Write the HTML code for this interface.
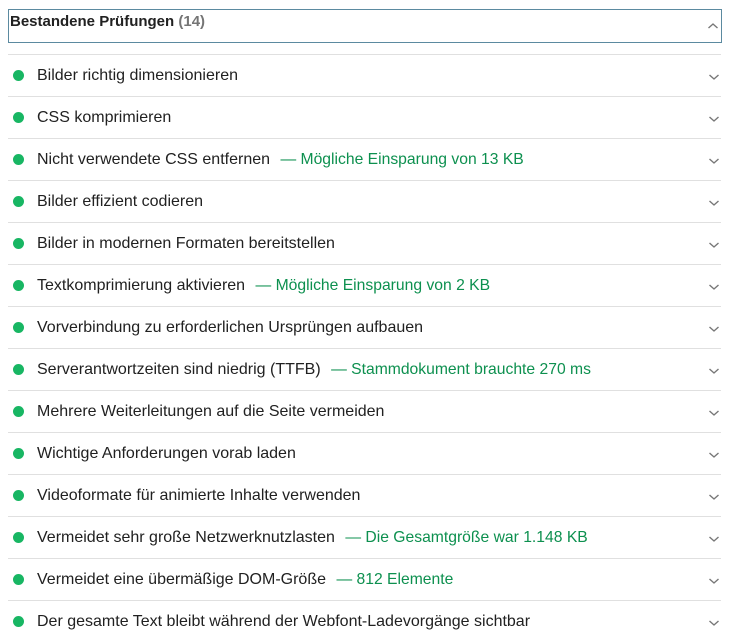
<!DOCTYPE html>
<html><head><meta charset="utf-8"><style>
body{margin:0;background:#fff;width:737px;height:637px;overflow:hidden;position:relative;font-family:"Liberation Sans",sans-serif;}
.hdr{position:absolute;left:8px;top:9px;width:712px;height:32px;border:1px solid #5b8aa0;box-sizing:content-box;}
.hdr .t{position:absolute;left:1px;top:3px;font-size:15px;font-weight:bold;color:#212121;}
.hdr .t span{color:#757575;}
.row{position:absolute;left:8px;width:713px;height:42px;border-top:1px solid #e0e0e0;}
.dot{position:absolute;left:5px;top:15px;width:11px;height:11px;border-radius:50%;background:#18b663;}
.txt{position:absolute;left:29px;top:12px;font-size:16px;color:#212121;white-space:nowrap;}
.g{color:#0d904f;margin-left:6px;font-size:15.7px;}
.chev{position:absolute;right:1px;top:18px;}
</style></head><body>
<div class="hdr"><div class="t">Bestandene Prüfungen <span>(14)</span></div>
<svg class="chev" style="top:12px;right:2px" width="12" height="8" viewBox="0 0 12 8"><path d="M1.5 6 L6 2 L10.5 6" fill="none" stroke="#777" stroke-width="1.4"/></svg></div>

<div class="row" style="top:54px"><div class="dot"></div><div class="txt">Bilder richtig dimensionieren</div><svg class="chev" width="12" height="8" viewBox="0 0 12 8"><path d="M1.5 2 L6 6 L10.5 2" fill="none" stroke="#777" stroke-width="1.4"/></svg></div>
<div class="row" style="top:96px"><div class="dot"></div><div class="txt">CSS komprimieren</div><svg class="chev" width="12" height="8" viewBox="0 0 12 8"><path d="M1.5 2 L6 6 L10.5 2" fill="none" stroke="#777" stroke-width="1.4"/></svg></div>
<div class="row" style="top:138px"><div class="dot"></div><div class="txt">Nicht verwendete CSS entfernen <span class="g">— Mögliche Einsparung von 13 KB</span></div><svg class="chev" width="12" height="8" viewBox="0 0 12 8"><path d="M1.5 2 L6 6 L10.5 2" fill="none" stroke="#777" stroke-width="1.4"/></svg></div>
<div class="row" style="top:180px"><div class="dot"></div><div class="txt">Bilder effizient codieren</div><svg class="chev" width="12" height="8" viewBox="0 0 12 8"><path d="M1.5 2 L6 6 L10.5 2" fill="none" stroke="#777" stroke-width="1.4"/></svg></div>
<div class="row" style="top:222px"><div class="dot"></div><div class="txt">Bilder in modernen Formaten bereitstellen</div><svg class="chev" width="12" height="8" viewBox="0 0 12 8"><path d="M1.5 2 L6 6 L10.5 2" fill="none" stroke="#777" stroke-width="1.4"/></svg></div>
<div class="row" style="top:264px"><div class="dot"></div><div class="txt">Textkomprimierung aktivieren <span class="g">— Mögliche Einsparung von 2 KB</span></div><svg class="chev" width="12" height="8" viewBox="0 0 12 8"><path d="M1.5 2 L6 6 L10.5 2" fill="none" stroke="#777" stroke-width="1.4"/></svg></div>
<div class="row" style="top:306px"><div class="dot"></div><div class="txt">Vorverbindung zu erforderlichen Ursprüngen aufbauen</div><svg class="chev" width="12" height="8" viewBox="0 0 12 8"><path d="M1.5 2 L6 6 L10.5 2" fill="none" stroke="#777" stroke-width="1.4"/></svg></div>
<div class="row" style="top:348px"><div class="dot"></div><div class="txt">Serverantwortzeiten sind niedrig (TTFB) <span class="g">— Stammdokument brauchte 270 ms</span></div><svg class="chev" width="12" height="8" viewBox="0 0 12 8"><path d="M1.5 2 L6 6 L10.5 2" fill="none" stroke="#777" stroke-width="1.4"/></svg></div>
<div class="row" style="top:390px"><div class="dot"></div><div class="txt">Mehrere Weiterleitungen auf die Seite vermeiden</div><svg class="chev" width="12" height="8" viewBox="0 0 12 8"><path d="M1.5 2 L6 6 L10.5 2" fill="none" stroke="#777" stroke-width="1.4"/></svg></div>
<div class="row" style="top:432px"><div class="dot"></div><div class="txt">Wichtige Anforderungen vorab laden</div><svg class="chev" width="12" height="8" viewBox="0 0 12 8"><path d="M1.5 2 L6 6 L10.5 2" fill="none" stroke="#777" stroke-width="1.4"/></svg></div>
<div class="row" style="top:474px"><div class="dot"></div><div class="txt">Videoformate für animierte Inhalte verwenden</div><svg class="chev" width="12" height="8" viewBox="0 0 12 8"><path d="M1.5 2 L6 6 L10.5 2" fill="none" stroke="#777" stroke-width="1.4"/></svg></div>
<div class="row" style="top:516px"><div class="dot"></div><div class="txt">Vermeidet sehr große Netzwerknutzlasten <span class="g">— Die Gesamtgröße war 1.148 KB</span></div><svg class="chev" width="12" height="8" viewBox="0 0 12 8"><path d="M1.5 2 L6 6 L10.5 2" fill="none" stroke="#777" stroke-width="1.4"/></svg></div>
<div class="row" style="top:558px"><div class="dot"></div><div class="txt">Vermeidet eine übermäßige DOM-Größe <span class="g">— 812 Elemente</span></div><svg class="chev" width="12" height="8" viewBox="0 0 12 8"><path d="M1.5 2 L6 6 L10.5 2" fill="none" stroke="#777" stroke-width="1.4"/></svg></div>
<div class="row" style="top:600px"><div class="dot"></div><div class="txt">Der gesamte Text bleibt während der Webfont-Ladevorgänge sichtbar</div><svg class="chev" width="12" height="8" viewBox="0 0 12 8"><path d="M1.5 2 L6 6 L10.5 2" fill="none" stroke="#777" stroke-width="1.4"/></svg></div>
</body></html>
